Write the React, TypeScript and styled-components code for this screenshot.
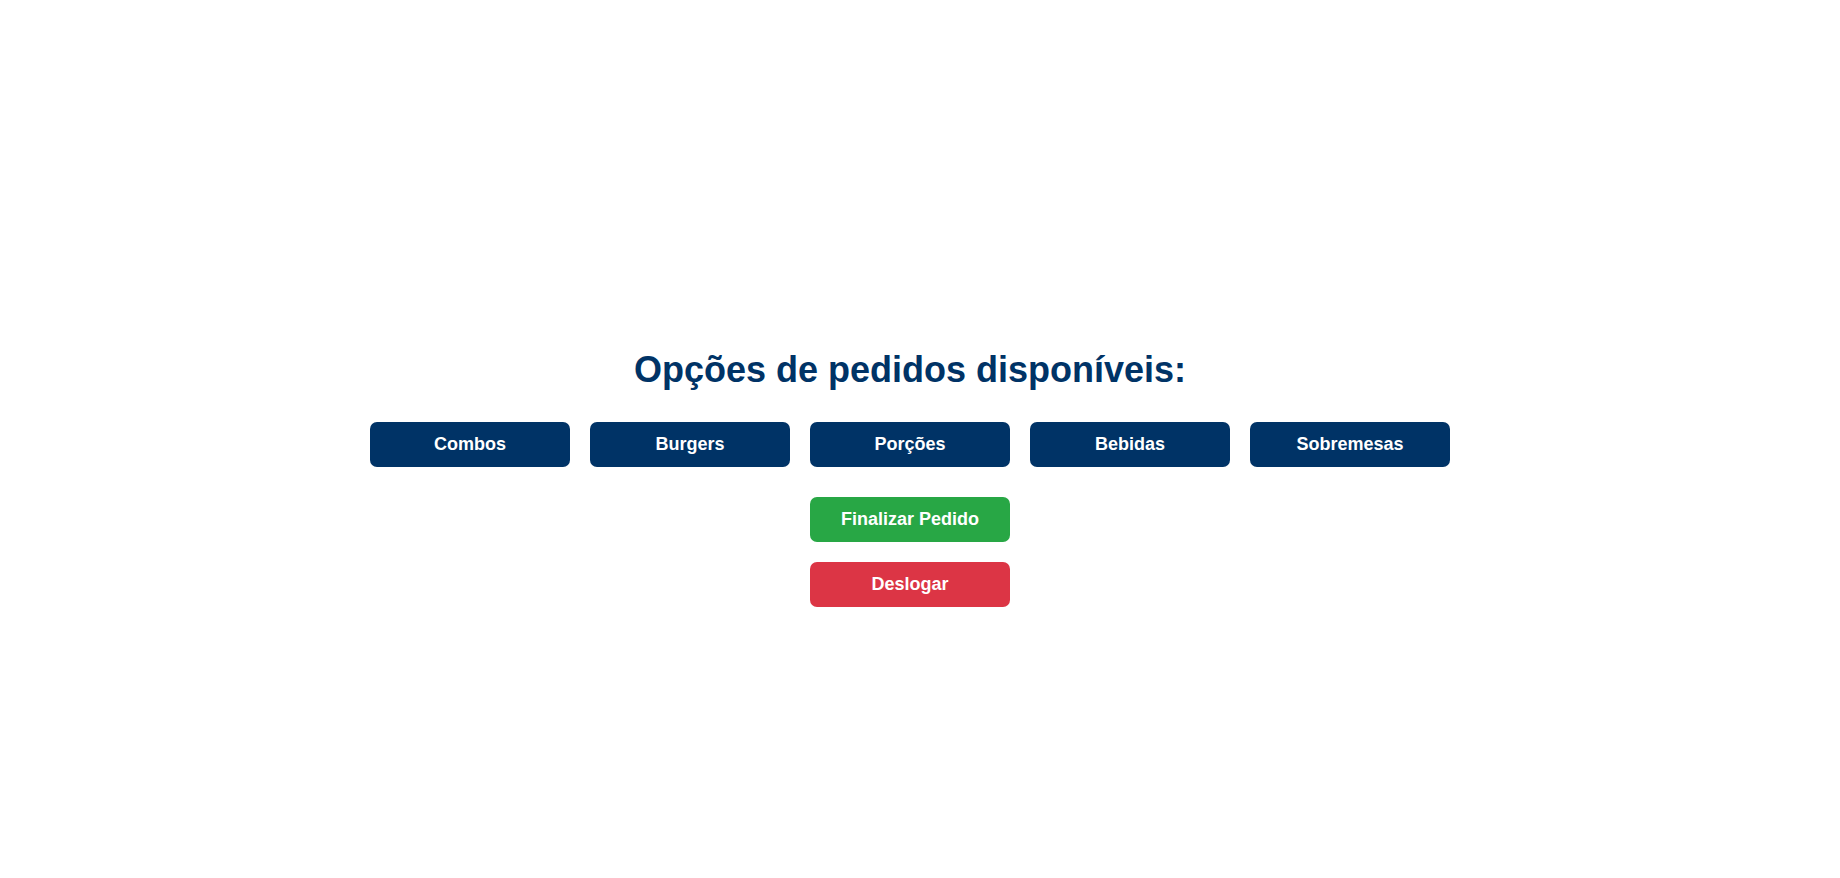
import React from "react";
import styled, { createGlobalStyle } from "styled-components";

const GlobalStyle = createGlobalStyle`
  html, body {
    margin: 0;
    padding: 0;
    background: #ffffff;
    font-family: "Liberation Sans", Arial, sans-serif;
  }
`;

const Page = styled.div`
  display: flex;
  flex-direction: column;
  align-items: center;
  padding: 350px 20px 0 0;
  box-sizing: border-box;
  width: 100%;
`;

const Title = styled.h1`
  margin: 0 0 32px;
  font-size: 36px;
  line-height: 40px;
  font-weight: 700;
  color: #003366;
`;

const CategoryRow = styled.div`
  display: flex;
  gap: 20px;
  margin-bottom: 30px;
`;

const ActionColumn = styled.div`
  display: flex;
  flex-direction: column;
  gap: 20px;
`;

const Button = styled.button<{ $bg: string }>`
  width: 200px;
  height: 45px;
  border: none;
  border-radius: 7px;
  background: ${(p) => p.$bg};
  color: #ffffff;
  font-family: "Liberation Sans", Arial, sans-serif;
  font-size: 18px;
  font-weight: 700;
  cursor: pointer;
  padding: 0;
`;

const categories = ["Combos", "Burgers", "Porções", "Bebidas", "Sobremesas"];

export default function App() {
  return (
    <>
      <GlobalStyle />
      <Page>
        <Title>Opções de pedidos disponíveis:</Title>
        <CategoryRow>
          {categories.map((c) => (
            <Button key={c} $bg="#003366">
              {c}
            </Button>
          ))}
        </CategoryRow>
        <ActionColumn>
          <Button $bg="#28a745">Finalizar Pedido</Button>
          <Button $bg="#dc3545">Deslogar</Button>
        </ActionColumn>
      </Page>
    </>
  );
}
